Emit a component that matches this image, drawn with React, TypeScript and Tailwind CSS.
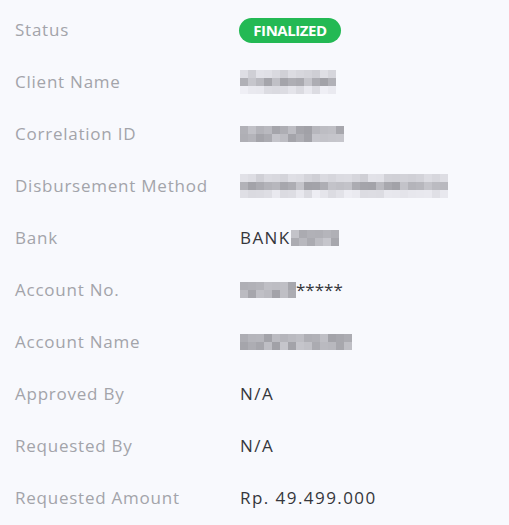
import type { ReactNode } from 'react';

type Row = { label: string; value: ReactNode };

// deterministic grays for the pixelated (redacted) values
const shade = (seed: number, row: number, rows: number) => {
  const x = Math.sin(seed * 12.9898 + row * 78.233) * 43758.5453;
  const r = x - Math.floor(x);
  const edge = rows === 3 && row !== 1;
  const base = edge ? 228 : 200;
  const spread = edge ? 22 : 40;
  const v = Math.round(base - r * spread + (row === 2 ? 12 : 0));
  const b = Math.min(250, v + 6);
  return `rgb(${v}, ${v}, ${b})`;
};

function Mosaic({ cols, rows, seed }: { cols: number; rows: number; seed: number }) {
  return (
    <span className="inline-flex flex-col align-middle">
      {Array.from({ length: rows }).map((_, r) => (
        <span key={r} className="flex">
          {Array.from({ length: cols }).map((__, c) => (
            <span
              key={c}
              className="block h-2 w-2"
              style={{ backgroundColor: shade(seed * 100 + c, r, rows) }}
            />
          ))}
        </span>
      ))}
    </span>
  );
}

const rows: Row[] = [
  {
    label: 'Status',
    value: (
      <span className="-ml-px inline-flex h-[25px] w-[102px] items-center justify-center rounded-full bg-[#23b954] text-[15px] font-bold tracking-[-0.03em] text-white">
        FINALIZED
      </span>
    ),
  },
  { label: 'Client Name', value: <Mosaic cols={12} rows={3} seed={1} /> },
  { label: 'Correlation ID', value: <Mosaic cols={13} rows={2} seed={2} /> },
  { label: 'Disbursement Method', value: <Mosaic cols={26} rows={3} seed={3} /> },
  {
    label: 'Bank',
    value: (
      <span className="inline-flex items-center">
        BANK
        <Mosaic cols={6} rows={2} seed={4} />
      </span>
    ),
  },
  {
    label: 'Account No.',
    value: (
      <span className="inline-flex items-center">
        <Mosaic cols={7} rows={2} seed={5} />
        <span className="tracking-normal">*****</span>
      </span>
    ),
  },
  { label: 'Account Name', value: <Mosaic cols={14} rows={2} seed={6} /> },
  { label: 'Approved By', value: 'N/A' },
  { label: 'Requested By', value: 'N/A' },
  { label: 'Requested Amount', value: 'Rp. 49.499.000' },
];

export default function App() {
  return (
    <div className="min-h-[525px] w-full bg-[#f8f9fd] pt-[4px] font-['Open_Sans',sans-serif]">
      {rows.map((row) => (
        <div key={row.label} className="flex h-[52px] items-center pl-[15px]">
          <span className="w-[225px] shrink-0 text-[17px] tracking-[0.045em] text-[#a3a4aa]">{row.label}</span>
          <span className="flex items-center text-[17px] tracking-[0.085em] text-[#35363b]">{row.value}</span>
        </div>
      ))}
    </div>
  );
}
